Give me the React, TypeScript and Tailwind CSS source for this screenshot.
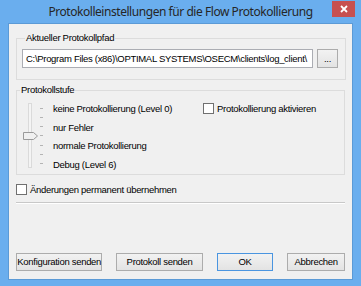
import React from "react";

const font = { fontFamily: '"Liberation Sans", Arial, sans-serif' };

const Checkbox = ({ label }: { label: string }) => (
  <label className="flex items-center gap-[3px] leading-[13px] text-black whitespace-nowrap">
    <span className="h-[11px] w-[11px] border border-[#707070] bg-white" />
    <span>{label}</span>
  </label>
);

const Button = ({ children, primary, className }: { children: React.ReactNode; primary?: boolean; className?: string }) => (
  <button
    className={
      "h-[18px] whitespace-nowrap leading-[14px] text-black bg-gradient-to-b from-[#f2f2f2] to-[#e3e3e3] border " +
      (primary ? "border-[#4a95e0] " : "border-[#acacac] ") +
      (className ?? "")
    }
  >
    {children}
  </button>
);

const Slider = () => {
  const ticks = [12, 21, 30, 39, 49, 58, 67];
  return (
    <svg width="26" height="76" viewBox="0 0 26 76" className="ml-[3px] shrink-0">
      <rect x="8.5" y="7.5" width="3" height="64" fill="#f4f4f4" stroke="#dadada" />
      {ticks.map((y) => (
        <line key={y} x1="20" x2="23" y1={y + 0.5} y2={y + 0.5} stroke="#b4b4b4" />
      ))}
      <path d="M3.5 36.5 H13.5 L17.5 40 L13.5 43.5 H3.5 Z" fill="#f0f0f0" stroke="#9a9a9a" />
    </svg>
  );
};

export default function App() {
  const levels = ["keine Protokollierung (Level 0)", "nur Fehler", "normale Protokollierung", "Debug (Level 6)"];
  return (
    <div className="w-[361px] h-[286px] bg-[#6aaeee] flex flex-col" style={font}>
      <div className="relative h-[23px] shrink-0 flex items-center justify-center">
        <span className="text-[12px] tracking-[-0.45px] text-[#262626] leading-[18px]" style={{ fontFamily: '"Noto Sans", sans-serif' }}>
          Protokolleinstellungen für die Flow Protokollierung
        </span>
        <div className="absolute right-[6px] top-[1px] w-[23px] h-[16px] bg-[#c75050] flex items-center justify-center">
          <svg width="8" height="8" viewBox="0 0 8 8">
            <path d="M1 1 L7 7 M7 1 L1 7" stroke="white" strokeWidth="1.8" />
          </svg>
        </div>
      </div>
      <div className="mx-[8px] mb-[6px] flex-1 bg-[#f0f0f0] border border-[#5b9ad6] flex flex-col text-[9.5px] tracking-[-0.3px] text-black">
        <fieldset className="mx-[7px] mt-[8px] border border-[#dcdcdc] pl-[5px] pr-[7px] pb-[11px]">
          <legend className="ml-[3px] px-[1px] leading-[12px]">Aktueller Protokollpfad</legend>
          <div className="mt-[5px] flex items-center gap-[4px]">
            <div className="h-[19px] w-[291px] border border-[#abadb3] bg-white pl-[3px] leading-[17px] whitespace-nowrap overflow-hidden">
              C:\Program Files (x86)\OPTIMAL SYSTEMS\OSECM\clients\log_client\
            </div>
            <Button className="w-[21px] h-[19px]">...</Button>
          </div>
        </fieldset>
        <fieldset className="mx-[7px] mt-[4px] border border-[#dcdcdc] pb-0">
          <legend className="ml-[3px] px-[1px] leading-[12px]">Protokollstufe</legend>
          <div className="flex items-start">
            <Slider />
            <div className="ml-[7px] w-[150px] pt-[4px] flex flex-col">
              {levels.map((l) => (
                <div key={l} className="h-[18.5px] leading-[18.5px] whitespace-nowrap">
                  {l}
                </div>
              ))}
            </div>
            <div className="mt-[6px]">
              <Checkbox label="Protokollierung aktivieren" />
            </div>
          </div>
        </fieldset>
        <div className="ml-[7px] mt-[8px]">
          <Checkbox label="Änderungen permanent übernehmen" />
        </div>
        <div className="mx-[7px] mt-[6px] h-[2px] border-t border-[#c8c8c8] border-b border-b-white" />
        <div className="mt-auto mb-[8px] flex px-[7px]">
          <Button className="w-[87px]">Konfiguration senden</Button>
          <Button className="ml-[14px] w-[87px]">Protokoll senden</Button>
          <Button primary className="ml-[14px] w-[57px]">OK</Button>
          <Button className="ml-[14px] w-[58px]">Abbrechen</Button>
        </div>
      </div>
    </div>
  );
}
